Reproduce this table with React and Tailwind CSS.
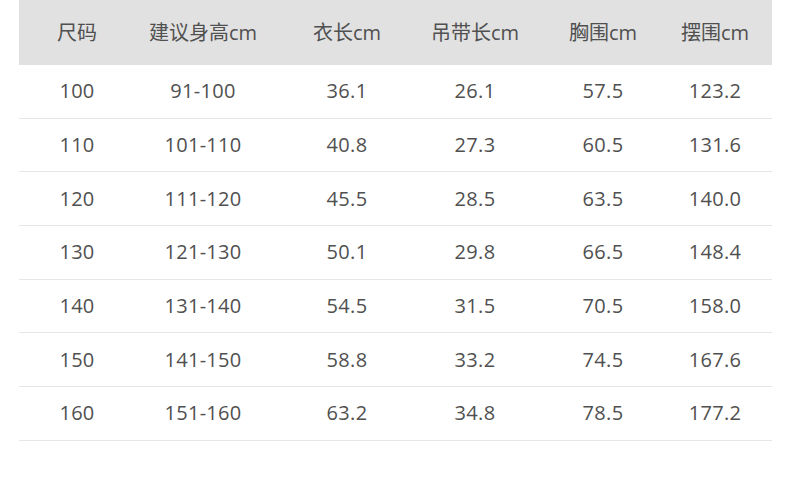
const headers = ['尺码', '建议身高cm', '衣长cm', '吊带长cm', '胸围cm', '摆围cm'];

const rows = [
  ['100', '91-100', '36.1', '26.1', '57.5', '123.2'],
  ['110', '101-110', '40.8', '27.3', '60.5', '131.6'],
  ['120', '111-120', '45.5', '28.5', '63.5', '140.0'],
  ['130', '121-130', '50.1', '29.8', '66.5', '148.4'],
  ['140', '131-140', '54.5', '31.5', '70.5', '158.0'],
  ['150', '141-150', '58.8', '33.2', '74.5', '167.6'],
  ['160', '151-160', '63.2', '34.8', '78.5', '177.2'],
];

const cols = 'grid grid-cols-[116px_136px_152px_104px_152px_93px]';

export default function App() {
  return (
    <div
      className="w-[790px] h-[485px] bg-white"
      style={{ fontFamily: '"Open Sans", "Noto Sans CJK SC", sans-serif' }}
    >
      <div className="ml-[19px] w-[753px] text-[20px] text-[#505050]">
        <div className={`${cols} h-[65px] items-center bg-[#e1e1e1]`}>
          {headers.map((h, i) => (
            <div key={h} className={`text-center ${i === 5 ? 'pr-[21px]' : ''}`}>
              {h}
            </div>
          ))}
        </div>
        {rows.map((r) => (
          <div
            key={r[0]}
            className={`${cols} h-[53.7px] items-center border-b border-[#e6e6e6]`}
          >
            {r.map((c, i) => (
              <div key={i} className={`text-center tracking-[0.3px] ${i === 5 ? 'pr-[21px]' : ''}`}>
                {c}
              </div>
            ))}
          </div>
        ))}
      </div>
    </div>
  );
}
